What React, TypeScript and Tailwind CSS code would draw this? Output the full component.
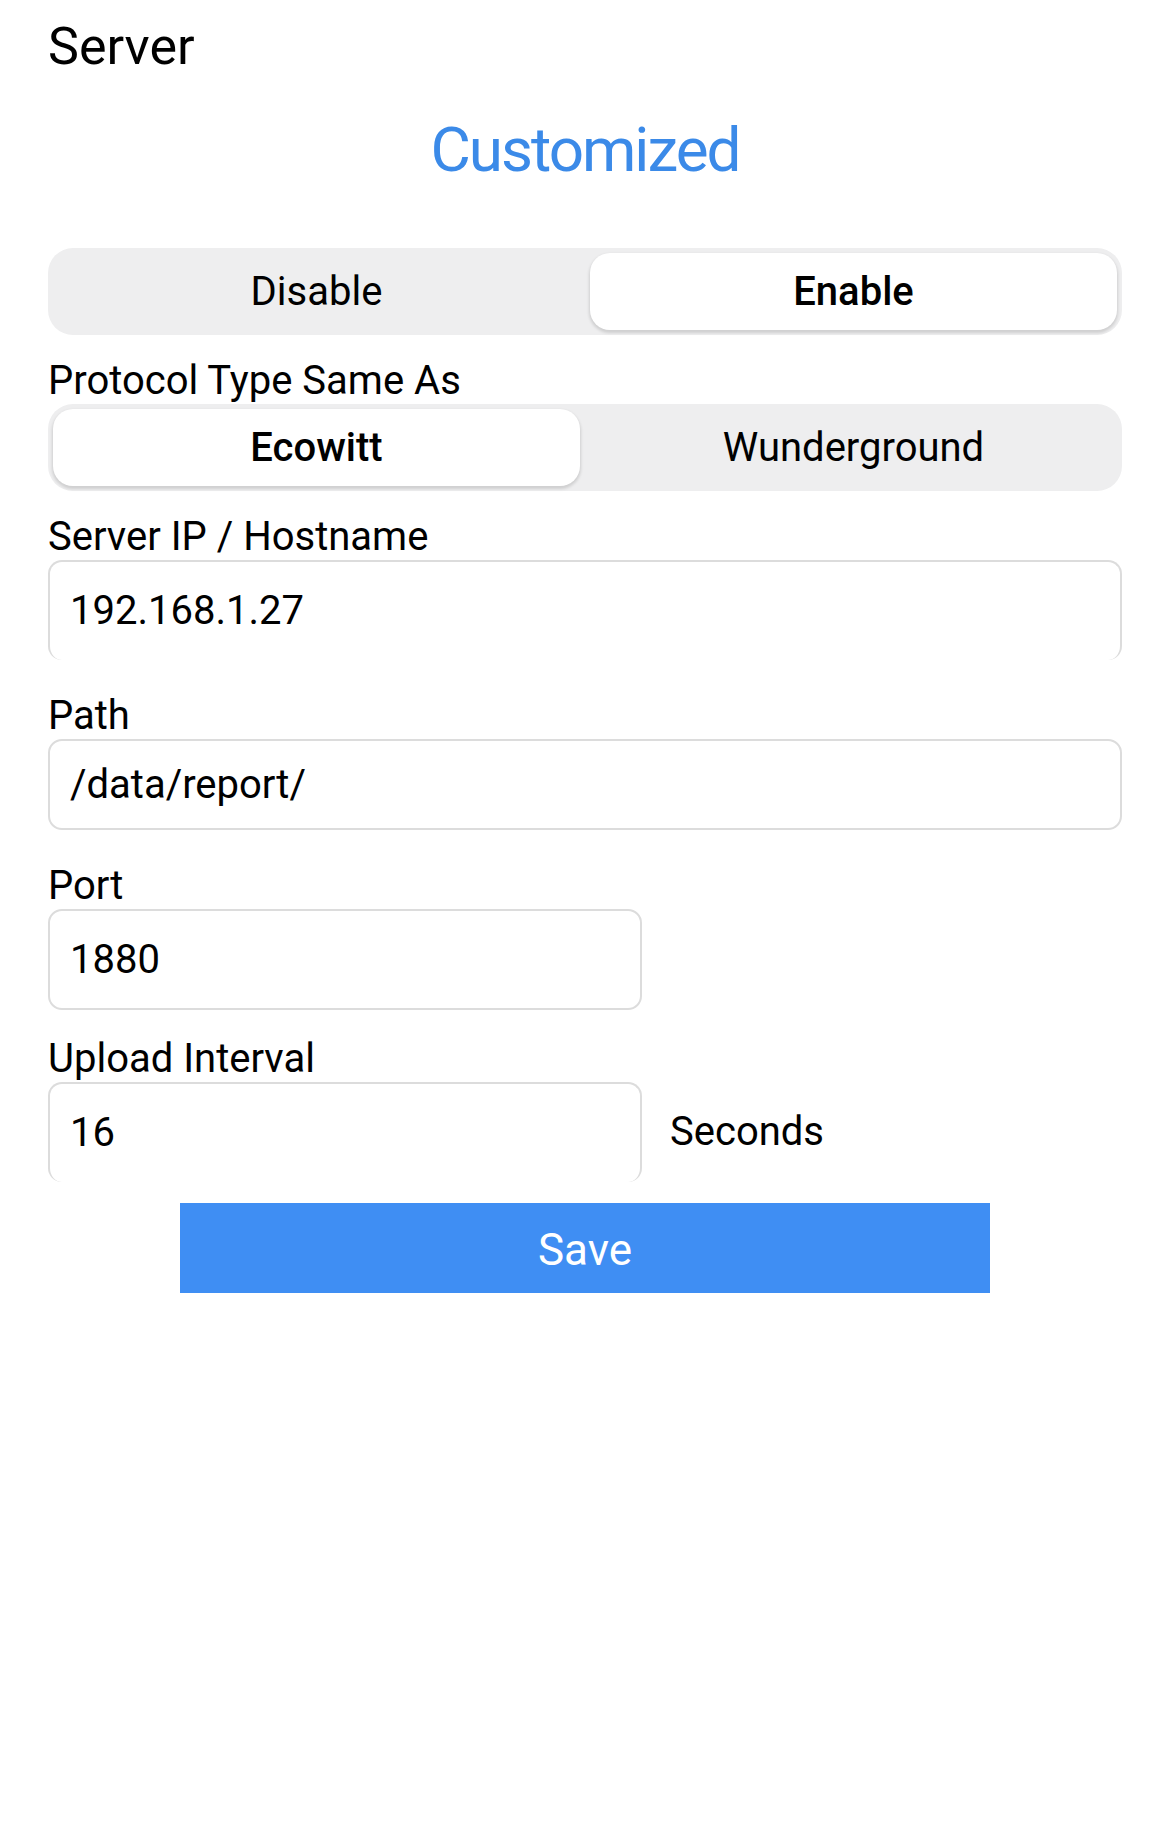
import React from "react";

const font = { fontFamily: "Roboto, 'Liberation Sans', sans-serif" };

interface SegmentProps {
  options: string[];
  selected: number;
}

function Segmented({ options, selected }: SegmentProps) {
  return (
    <div className="flex h-[87px] w-full gap-[10px] rounded-[25px] bg-[#eeeeef] p-[5px]">
      {options.map((opt, i) => (
        <div
          key={opt}
          className={
            i === selected
              ? "flex flex-1 items-center justify-center rounded-[20px] bg-white text-[40px] font-medium text-black shadow-[0_2px_3px_1px_rgba(0,0,0,0.13)]"
              : "flex flex-1 items-center justify-center text-[40px] text-black"
          }
        >
          {opt}
        </div>
      ))}
    </div>
  );
}

function Label({ children, className }: { children: React.ReactNode; className?: string }) {
  return <div className={"text-[40px] leading-[46px] text-black " + (className ?? "")}>{children}</div>;
}

export default function App() {
  return (
    <div className="min-h-[1831px] w-[1170px] bg-white px-[48px]" style={font}>
      {/* Header */}
      <div className="pt-[17px] text-[52px] leading-[60px] text-black">Server</div>
      <div className="mt-[37px] text-center text-[62px] leading-[72px] tracking-[-2px] text-[#3b8ae8]">
        Customized
      </div>

      {/* Enable switch */}
      <div className="mt-[62px]">
        <Segmented options={["Disable", "Enable"]} selected={1} />
      </div>

      {/* Protocol */}
      <Label className="mt-[23px]">Protocol Type Same As</Label>
      <Segmented options={["Ecowitt", "Wunderground"]} selected={0} />

      {/* Server IP */}
      <Label className="mt-[23px]">Server IP / Hostname</Label>
      <div className="flex h-[100px] items-center rounded-[14px] border-2 border-b-0 border-[#dcdcdc] pl-[20px] text-[40px] text-black">
        192.168.1.27
      </div>

      {/* Path */}
      <Label className="mt-[33px]">Path</Label>
      <div className="flex h-[91px] items-center rounded-[14px] border-2 border-[#dcdcdc] pl-[20px] text-[40px] text-black">
        /data/report/
      </div>

      {/* Port */}
      <Label className="mt-[33px]">Port</Label>
      <div className="flex h-[101px] w-[594px] items-center rounded-[14px] border-2 border-[#dcdcdc] pl-[20px] text-[40px] text-black">
        1880
      </div>

      {/* Upload interval */}
      <Label className="mt-[26px]">Upload Interval</Label>
      <div className="flex items-center gap-[28px]">
        <div className="flex h-[100px] w-[594px] items-center rounded-[14px] border-2 border-b-0 border-[#dcdcdc] pl-[20px] text-[40px] text-black">
          16
        </div>
        <span className="text-[40px] text-black">Seconds</span>
      </div>

      {/* Save */}
      <div className="mt-[21px] flex justify-center">
        <button className="flex h-[90px] w-[810px] items-center justify-center bg-[#3f8ef3] pt-[3px] text-[44px] text-white">
          Save
        </button>
      </div>
    </div>
  );
}
